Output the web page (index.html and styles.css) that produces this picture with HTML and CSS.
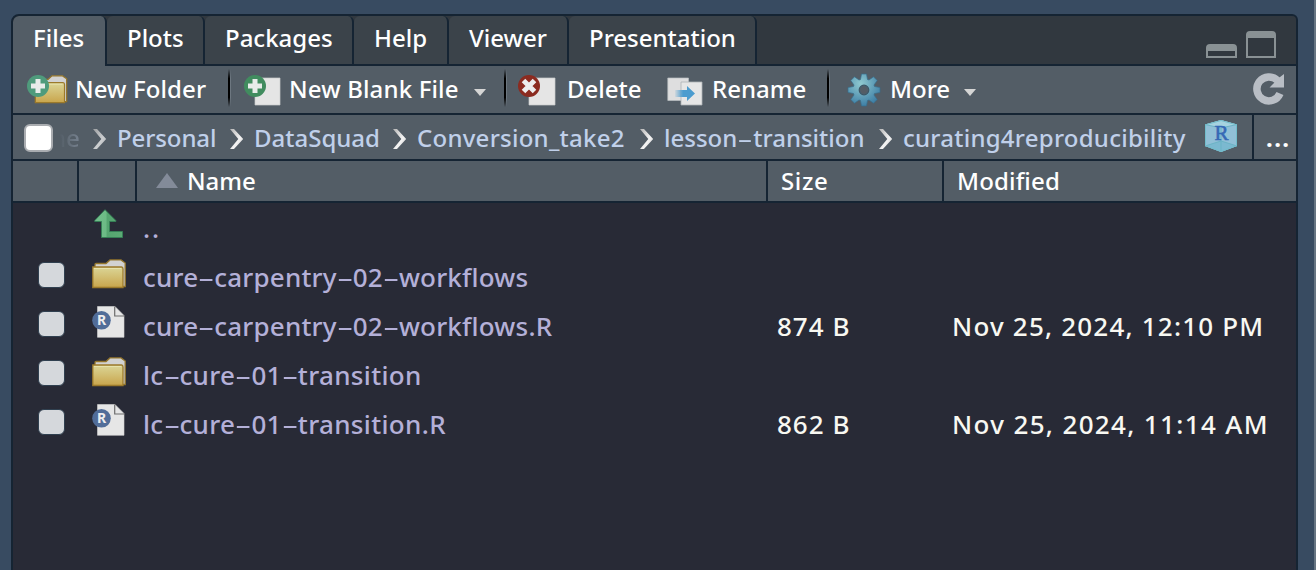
FILE: index.html
```html
<!DOCTYPE html>
<html lang="en">
<head>
<meta charset="utf-8">
<title>Files</title>
<link rel="stylesheet" href="styles.css">
</head>
<body>
<svg class="defs" width="0" height="0">
  <defs>
    <linearGradient id="gold" x1="0" y1="0" x2="0" y2="1"><stop offset="0" stop-color="#dbd697"/><stop offset="1" stop-color="#c9a54c"/></linearGradient>
    <linearGradient id="chev" x1="0" y1="0" x2="1" y2="1"><stop offset="0" stop-color="#b5b5b5"/><stop offset=".6" stop-color="#f4f4f4"/><stop offset="1" stop-color="#c4c4c4"/></linearGradient>
    <linearGradient id="arrow" x1="0" y1="0" x2="1" y2="0"><stop offset="0" stop-color="#4c9ccf" stop-opacity=".1"/><stop offset=".4" stop-color="#4c9ccf"/></linearGradient>
    <linearGradient id="green" x1="0" y1="0" x2="1" y2="0"><stop offset="0" stop-color="#74bd8d"/><stop offset=".4" stop-color="#6cbb85"/><stop offset=".45" stop-color="#55a570"/><stop offset="1" stop-color="#5cab75"/></linearGradient>
    <radialGradient id="gear" cx=".4" cy=".3" r=".7"><stop offset="0" stop-color="#8fc9d0"/><stop offset="1" stop-color="#3f80a6"/></radialGradient>
    <symbol id="folder" viewBox="0 0 34 30">
      <path d="M3 8V5.500Q3 4.500 4 4.500H14L18 .9H29L33.200 4V27.500H30" fill="#d2d2d2" stroke="#94762c" stroke-width="1.300"/>
      <path d="M.8 8H29.500Q31 8 31 10V28.500H.8Z" fill="url(#gold)" stroke="#9c7a2b" stroke-width="1.300"/>
      <path d="M2 9.500H29" stroke="#e6e2ac" stroke-width="1"/>
    </symbol>
    <symbol id="rfile" viewBox="0 0 34 32">
      <path d="M5.500 .5H23L32 9.500V31.300H5.500Z" fill="#e6e6e6" stroke="#d5d5d5" stroke-width=".6"/>
      <path d="M22.700 .5V10H32" fill="none" stroke="#6d6d6d" stroke-width="1.200"/>
      <circle cx="9.500" cy="14.300" r="9.300" fill="#516d99"/>
      <text x="9.700" y="19.300" text-anchor="middle" class="rmark">R</text>
    </symbol>
    <symbol id="chevron" viewBox="0 0 14 20"><path d="M0 0H4L13.200 10L4 20H0L8.300 10Z" fill="url(#chev)"/></symbol>
  </defs>
</svg>
<div class="pane">
  <div class="tabs">
    <div class="tab active t-files"><span>Files</span></div>
    <div class="tab t-plots"><span>Plots</span></div>
    <div class="tab t-packages"><span>Packages</span></div>
    <div class="tab t-help"><span>Help</span></div>
    <div class="tab t-viewer"><span>Viewer</span></div>
    <div class="tab t-presentation"><span>Presentation</span></div>
    <div class="window-controls">
      <svg width="31" height="14" viewBox="0 0 31 14"><path d="M0 14V4Q0 0 4 0H27Q31 0 31 4V14ZM2 7V12H29V7Z" fill="#899194" fill-rule="evenodd"/></svg>
      <svg width="30" height="27" viewBox="0 0 30 27"><path d="M0 27V4Q0 0 4 0H26Q30 0 30 4V27ZM2 7V25H28V7Z" fill="#899194" fill-rule="evenodd"/></svg>
    </div>
  </div>
  <div class="toolbar">
    <svg class="i-newfolder" width="42" height="34" viewBox="0 0 42 34">
      <use href="#folder" x="7" y="1" width="34" height="29"/>
      <circle cx="11" cy="12" r="11" fill="#4f9b7c"/><path d="M8.500 5H13.500V9.500H18V14.500H13.500V19H8.500V14.500H4V9.500H8.500Z" fill="#e8ecea"/>
    </svg>
    <span class="label l-newfolder">New Folder</span>
    <i class="sep s1"></i>
    <svg class="i-newfile" width="38" height="34" viewBox="0 0 38 34">
      <path d="M11 4H36V31H11Z" fill="#e5e5e5" stroke="#c9cbcc" stroke-width=".7"/>
      <circle cx="11" cy="12" r="11" fill="#418c5f"/><path d="M8.500 5H13.500V9.500H18V14.500H13.500V19H8.500V14.500H4V9.500H8.500Z" fill="#e8ecea"/>
    </svg>
    <span class="label l-newfile">New Blank File</span>
    <i class="caret"></i>
    <i class="sep s2"></i>
    <svg class="i-delete" width="38" height="34" viewBox="0 0 38 34">
      <path d="M11 4H37V31H11Z" fill="#e5e5e5" stroke="#c9cbcc" stroke-width=".7"/>
      <circle cx="11" cy="12" r="11" fill="#8b2b20"/><path d="M5.500 6.500L16.500 17.500M16.500 6.500L5.500 17.500" stroke="#ededed" stroke-width="5"/>
    </svg>
    <span class="label l-delete">Delete</span>
    <svg class="i-rename" width="36" height="34" viewBox="0 0 36 34">
      <path d="M.8 4H21.500V26.500H.8Z" fill="#dededf" stroke="#b9bec2" stroke-width=".7"/>
      <path d="M14 8H35V31H14Z" fill="#e6e6e6" stroke="#adb2b5" stroke-width=".8"/>
      <path d="M8 16H20V12L28 19.500L20 27V23H8Z" fill="url(#arrow)"/>
    </svg>
    <span class="label l-rename">Rename</span>
    <i class="sep s3"></i>
    <svg class="i-gear" width="34" height="34" viewBox="-17 -17 34 34">
      <path fill="url(#gear)" stroke="#386f8d" stroke-width=".7" stroke-linejoin="round" fill-rule="evenodd" d="M-3.500-10.500L-2.500-16H2.500L3.500-10.500L5-10L9.500-13.200L13.200-9.500L10-5L10.500-3.500L16-2.500V2.500L10.500 3.500L10 5L13.200 9.500L9.500 13.200L5 10L3.500 10.500L2.500 16H-2.500L-3.500 10.500L-5 10L-9.500 13.200L-13.200 9.500L-10 5L-10.500 3.500L-16 2.500V-2.500L-10.500-3.500L-10-5L-13.200-9.500L-9.500-13.200L-5-10ZM0-4.500A4.500 4.500 0 1 0 0 4.500A4.500 4.500 0 1 0 0-4.500Z"/>
      <circle r="4.800" fill="none" stroke="#3e5664" stroke-width="1.200"/>
    </svg>
    <span class="label l-more">More</span>
    <i class="caret"></i>
    <svg class="i-refresh" width="32" height="32" viewBox="0 0 32 32">
      <path d="M27 20.500A12 12 0 1 1 24.500 7.500" fill="none" stroke="#b9bec5" stroke-width="7.500"/>
      <path d="M31 1V14.500H16.500L21 10L25 5.500Z" fill="#b9bec5"/>
    </svg>
  </div>
  <div class="path">
    <i class="check-all"></i>
    <span class="crumb faded">ne</span>
    <svg class="chevron first"><use href="#chevron"/></svg>
    <span class="crumb c1">Personal</span>
    <svg class="chevron"><use href="#chevron"/></svg>
    <span class="crumb c2">DataSquad</span>
    <svg class="chevron"><use href="#chevron"/></svg>
    <span class="crumb c3">Conversion_take2</span>
    <svg class="chevron"><use href="#chevron"/></svg>
    <span class="crumb c4">lesson<b class="dash">-</b>transition</span>
    <svg class="chevron"><use href="#chevron"/></svg>
    <span class="crumb c5">curating4reproducibility</span>
    <svg class="cube" width="32" height="32" viewBox="0 0 32 32">
      <path d="M0 4.500L16 0L32 4.500V26L16 32L0 26Z" fill="#91c0d7"/>
      <path d="M0 4.500L16 0L32 4.500L16 8Z" fill="#a6d3df"/><path d="M0 26L16 21L32 26L16 32Z" fill="#7bb9d0"/>
      <path d="M0 4.500L16 8L32 4.500M0 26L16 21L32 26M16 8V32" fill="none" stroke="#6bb3c5" stroke-width="1"/>
      <path d="M.5 4.800L16 .5L31.500 4.800V25.700L16 31.500L.5 25.700Z" fill="none" stroke="#72bdcb"/>
      <text x="16.500" y="20" text-anchor="middle" class="cube-r">R</text>
    </svg>
    <span class="browse">...</span>
  </div>
  <div class="grid head">
    <div></div><div></div>
    <div class="h-name"><svg width="22" height="15" viewBox="0 0 22 15"><path d="M11 0L22 15H0Z" fill="#838b99"/></svg><span>Name</span></div>
    <div class="h-size"><span>Size</span></div>
    <div class="h-mod"><span>Modified</span></div>
  </div>
  <div class="list">
    <div class="row">
      <i></i>
      <svg class="up" width="30" height="30" viewBox="0 0 30 30"><path d="M11 .7L21.800 11.500V12.500H15.500V22.500H28.500V28.500H7.500V12.500H.8V11.500Z" fill="url(#green)" stroke="#367f56" stroke-width="1"/></svg>
      <span class="name n0">..</span>
    </div>
    <div class="row">
      <i class="box"></i><svg class="folder"><use href="#folder"/></svg>
      <span class="name n1">cure<b class="dash">-</b>carpentry<b class="dash">-</b>02<b class="dash">-</b>workflows</span>
    </div>
    <div class="row">
      <i class="box"></i><svg class="rfile"><use href="#rfile"/></svg>
      <span class="name n1">cure<b class="dash">-</b>carpentry<b class="dash">-</b>02<b class="dash">-</b>workflows.R</span>
      <span class="size">874 B</span><span class="date">Nov 25, 2024, 12:10 PM</span>
    </div>
    <div class="row">
      <i class="box"></i><svg class="folder"><use href="#folder"/></svg>
      <span class="name">lc<b class="dash">-</b>cure<b class="dash">-</b>01<b class="dash">-</b>transition</span>
    </div>
    <div class="row">
      <i class="box"></i><svg class="rfile"><use href="#rfile"/></svg>
      <span class="name">lc<b class="dash">-</b>cure<b class="dash">-</b>01<b class="dash">-</b>transition.R</span>
      <span class="size">862 B</span><span class="date d2">Nov 25, 2024, 11:14 AM</span>
    </div>
  </div>
</div>
</body>
</html>
```
FILE: styles.css
```css
* { box-sizing: border-box; }
body {
  margin: 0; height: 570px; overflow: hidden; padding: 14px 16px 0 11px;
  background: #384b61; border-right: 2px solid #667482;
  font: 500 24px/32px "Noto Sans", sans-serif; color: #fff; white-space: nowrap;
}
.defs { display: block; position: absolute; }
svg { flex: none; display: block; overflow: visible; }
.pane {
  width: 1287px; height: 558px; display: flex; flex-direction: column;
  border: 2px solid #152433; border-radius: 8px 6px 0 0; background: #282a36;
  overflow: hidden;
}
.tabs { height: 50px; flex: none; display: flex; background: #31383f; box-shadow: inset 0 -2px #152433; }
.tab {
  height: 50px; padding: 6px 0 0 20px; background: #3b434a;
  border-right: 2px solid #152433; border-bottom: 2px solid #152433;
  border-radius: 6px 6px 0 0;
}
.tab.active { background: #535d66; border-bottom: 0; }
.t-files { width: 94px; }
.t-plots { width: 98px; }
.t-packages { width: 149px; }
.t-help { width: 95px; }
.t-viewer { width: 120px; }
.t-presentation { width: 188px; }
.window-controls { margin-left: auto; padding: 0 20px 8px 0; display: flex; gap: 9px; align-items: flex-end; }
.toolbar {
  height: 49px; flex: none; display: flex; background: #535d66;
  border-bottom: 2px solid #152433; padding-left: 14px;
}
.toolbar > svg { margin-top: 8px; }
.label { margin-top: 7px; flex: none; }
.l-newfolder { width: 153px; margin-left: 6px; letter-spacing: .1px; }
.l-newfile { width: 185px; margin-left: 7px; letter-spacing: .15px; }
.l-delete { width: 100px; margin-left: 11px; }
.l-rename { width: 115px; margin-left: 9px; }
.l-more { width: 74px; margin-left: 9px; }
.sep {
  flex: none; width: 3px; height: 38px; margin-top: 3px;
  background: linear-gradient(90deg, #000 0 60%, #6d7780 60%);
  mask: linear-gradient(transparent, #000 25%, #000 75%, transparent);
}
.s1 { margin-right: 13px; }
.s2 { margin: 3px 11px 0 18px; }
.s3 { margin-right: 17px; }
.caret { flex: none; width: 12px; height: 7px; margin-top: 23px; background: #d5d5d5; clip-path: polygon(0 0, 100% 0, 50% 100%); }
.toolbar > .i-gear { margin-top: 7px; }
.toolbar > .i-refresh { margin: 7px 11px 0 auto; }
.path {
  height: 46px; flex: none; display: flex; background: #535d66;
  border-bottom: 2px solid #152433; color: #c0d0ea;
}
.check-all { flex: none; width: 29px; height: 28px; margin: 9px 0 0 11px; background: #fff; border: 2px solid #aaadb1; border-radius: 6px; }
.crumb { flex: none; margin-top: 7px; }
.faded { width: 42px; margin-left: -2px; color: transparent; background: linear-gradient(90deg, #535d66 20%, #8f9bab); -webkit-background-clip: text; background-clip: text; }
.chevron { width: 14px; height: 20px; margin: 14px 10px 0 0; }
.chevron.first { opacity: .75; }
.c1 { width: 113px; letter-spacing: -.1px; }
.c2 { width: 139px; }
.c3 { width: 223px; letter-spacing: .25px; }
.c4 { width: 215px; }
.c5 { width: 302px; letter-spacing: .25px; }
.dash { display: inline-block; width: 16px; font-weight: 400; text-align: center; transform: scaleX(2); letter-spacing: 0; }
.cube { margin-top: 5px; }
.cube-r { font: 21px "Liberation Serif", serif; fill: #3568b5; stroke: #3568b5; stroke-width: .6px; }
.browse { margin-left: 15px; width: 44px; height: 44px; border-left: 2px solid #152433; padding: 7px 0 0 12px; color: #fff; font-weight: 700; letter-spacing: 1.4px; }
.grid { display: grid; grid-template-columns: 66px 58px 631px 176px 1fr; }
.head { flex: none; height: 42px; background: #535d66; border-bottom: 2px solid #152433; }
.head > div { display: flex; border-right: 2px solid #152433; padding-top: 4px; }
.head > div:last-child { border-right: 0; }
.h-name svg { margin: 8px 9px 0 19px; }
.head > .h-size, .head > .h-mod { padding-left: 13px; letter-spacing: .15px; }
.h-size span { letter-spacing: .6px; }
.list { font-size: 26px; font-weight: 500; }
.row { height: 49px; display: grid; grid-template-columns: 79px 51px 634px 175px 1fr; }
.row > span { padding-top: 8.500px; }
.name { color: #b4b0d8; letter-spacing: .35px; }
.n0 { letter-spacing: 2px; }
.n1 { letter-spacing: .2px; }
.size, .date { color: #f8f8f2; letter-spacing: 1.2px; }
.size { letter-spacing: 1px; }
.d2 { letter-spacing: 1.35px; }
.box { width: 27px; height: 26px; margin: 10px 0 0 25px; background: #d5d8dc; border: 1px solid #304050; border-radius: 6px; }
.folder { width: 34px; height: 30px; margin-top: 7px; }
.rfile { width: 34px; height: 32px; margin-top: 5px; }
.up { margin: 6px 0 0 2px; }
.rmark { font: 700 14px "Noto Sans", sans-serif; fill: #eee; }
```
